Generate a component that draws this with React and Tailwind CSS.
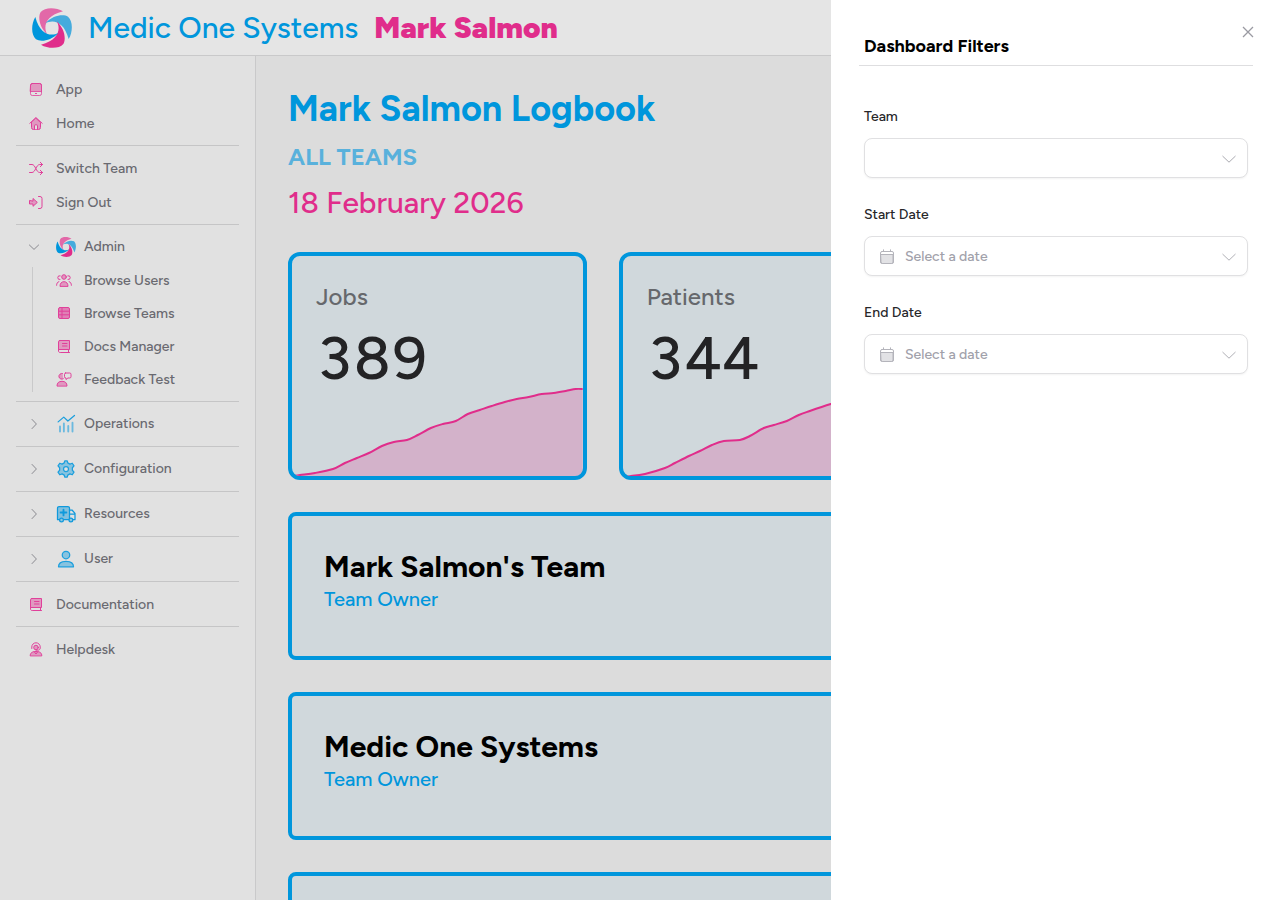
import { useState } from 'react';

const jobsData = [
  [2, 88], [8, 87], [23, 85], [41, 81], [53, 75], [65, 70], [77, 65], [90, 58], [102, 54], [115, 52],
  [126, 47], [139, 40], [151, 36], [164, 33], [176, 26], [188, 22], [200, 18], [213, 14], [225, 11],
  [237, 9], [250, 6], [262, 5], [274, 3], [284, 1], [291, 1],
];

const patientsData = [
  [2, 88], [8, 88], [22, 86], [42, 80], [52, 75], [66, 68], [77, 63], [89, 57], [101, 53], [117, 52],
  [127, 48], [141, 40], [151, 37], [164, 33], [176, 27], [187, 23], [208, 16], [225, 11], [250, 6],
  [274, 3], [284, 1], [291, 1],
];

const smoothLine = (points) => {
  let d = `M${points[0][0]} ${points[0][1]}`;
  for (let i = 0; i < points.length - 1; i++) {
    const p0 = points[i - 1] || points[i];
    const p1 = points[i];
    const p2 = points[i + 1];
    const p3 = points[i + 2] || p2;
    d += `C${p1[0] + (p2[0] - p0[0]) / 6} ${p1[1] + (p2[1] - p0[1]) / 6} ${p2[0] - (p3[0] - p1[0]) / 6} ${p2[1] - (p3[1] - p1[1]) / 6} ${p2[0]} ${p2[1]}`;
  }
  return d;
};

const Logo = ({ className }) => {
  const blade = 'M93 10C72 -3 38 -3 26 12C18 25 20 56 46 80C33 58 39 24 93 10Z';
  return (
    <svg viewBox="0 0 120 120" className={className} aria-hidden="true">
      <path d={blade} fill="#e268a8" />
      <path d={blade} fill="#45abdd" transform="rotate(90 60 60)" />
      <path d={blade} fill="#e02d8b" transform="rotate(180 60 60)" />
      <path d={blade} fill="#0096dc" transform="rotate(270 60 60)" />
    </svg>
  );
};

const Icon = ({ className = 'size-4 text-[#e0409a]', children }) => (
  <svg
    viewBox="0 0 16 16"
    fill="none"
    stroke="currentColor"
    strokeLinecap="round"
    strokeLinejoin="round"
    className={`shrink-0 ${className}`}
    aria-hidden="true"
  >
    {children}
  </svg>
);

const tint = { fill: 'currentColor', fillOpacity: 0.45 };

const AppIcon = () => (
  <Icon>
    <rect x="2.5" y="1.5" width="11" height="12" rx="1.8" strokeOpacity="0.8" />
    <path d="M2.5 3.3a1.8 1.8 0 0 1 1.8-1.8h7.4a1.8 1.8 0 0 1 1.8 1.8v6.2h-11Z" {...tint} strokeOpacity="0.8" />
    <path d="M7.5 11.5h1" />
  </Icon>
);

const HomeIcon = () => (
  <Icon>
    <path d="M3.5 6.500v5a2 2 0 0 0 2 2h5a2 2 0 0 0 2-2v-5L8 2.300Z" {...tint} />
    <path d="M1.800 7.300L8 1.600L14.200 7.300" />
    <path d="M6.500 13.300V9.500a.6.6 0 0 1 .6-.6h1.800a.6.6 0 0 1 .6.6v3.800" fill="#e1e1e1" />
  </Icon>
);

const ShuffleIcon = () => (
  <Icon>
    <path d="M1.500 3.500H4C7.500 3.500 8 11.500 11.800 11.500H14.500M1.500 11.500H4C7.500 11.500 8 3.500 11.800 3.500H14.500" />
    <path d="M12.300 1.300L14.500 3.500L12.300 5.700M12.300 9.300L14.500 11.500L12.300 13.700" />
  </Icon>
);

const SignOutIcon = () => (
  <Icon>
    <path d="M1.500 5.800v3.200h3.500v2.300L9.300 7.400L5 3.500V5.800Z" {...tint} />
    <path d="M10.500 1.500h1.500a2 2 0 0 1 2 2v8a2 2 0 0 1-2 2h-1.500" />
  </Icon>
);

const UsersIcon = () => (
  <Icon>
    <circle cx="8" cy="4" r="2.300" {...tint} />
    <path d="M4 13c0-2.600 1.500-4.300 4-4.300s4 1.700 4 4.300Z" {...tint} />
    <path d="M4 6.500a1.900 1.900 0 1 1 .2-3.700M12 6.500a1.900 1.900 0 1 0-.2-3.700M.6 12.300c0-1.900.8-3.200 2.300-3.700M15.400 12.300c0-1.900-.8-3.200-2.300-3.700" />
  </Icon>
);

const TableIcon = () => (
  <Icon>
    <rect x="2.500" y="1.500" width="11" height="11" rx="1.500" {...tint} fillOpacity="0.6" />
    <path d="M2.500 5.200h11M2.500 8.800h11M6 1.500v11" />
  </Icon>
);

const BookIcon = () => (
  <Icon>
    <path d="M3.800 1.500h9.700v9h-11V2.800a1.300 1.300 0 0 1 1.300-1.300Z" {...tint} />
    <path d="M2.500 10.500v1.500c0 1 .7 1.500 1.700 1.500h9.300M12.500 10.500v3M6.500 4.500h4.500M6.500 7h4.500" />
  </Icon>
);

const FeedbackIcon = () => (
  <Icon>
    <path d="M1 13.700c0-2.700 1.700-4.400 5-4.400s5 1.700 5 4.400Z" {...tint} />
    <path d="M6.500 1.500a2.900 2.900 0 1 0 .8 5.300" {...tint} />
    <path d="M9.500 1h4.200a1.300 1.300 0 0 1 1.300 1.300v2.400a1.300 1.300 0 0 1-1.300 1.300h-1.800L10 7.500V6a1.300 1.300 0 0 1-1.500-1.300V2.300a1.300 1.300 0 0 1 1-1.300Z" />
  </Icon>
);

const HelpdeskIcon = () => (
  <Icon>
    <path d="M2.200 13.500c0-2.500 1.800-4 5.800-4s5.800 1.500 5.800 4Z" {...tint} />
    <path d="M6 9.500l2 2.500l2-2.500M3.800 6.500V5a4.200 4.200 0 0 1 8.400 0v1c0 1.500-1 2.200-2.500 2.200H8" />
    <circle cx="8" cy="5.500" r="2.300" {...tint} />
  </Icon>
);

const ChartIcon = () => (
  <Icon className="size-5 text-[#1c9fdd]">
    <path d="M1.700 6.300L6.200 2.500L9.500 5.600L14.800 1.200" />
    <path d="M3.200 10v4M6.300 7.500v6.500M9.800 9.500v4.500M13.200 7v7" strokeWidth="1.500" strokeOpacity="0.6" />
  </Icon>
);

const GearIcon = () => (
  <Icon className="size-5 text-[#1c9fdd]">
    <path
      d="M6.600 3.100L7 1.500h2l.4 1.600l1.700 1l1.900-.7l1.400 2.100L13.100 7v2l1.300 1.500l-1.400 2.100l-1.900-.7l-1.700 1L9 14.500H7l-.4-1.600l-1.700-1l-1.900.7l-1.400-2.100L2.900 9V7L1.600 5.500L3 3.400l1.900.7Z"
      {...tint}
    />
    <circle cx="8" cy="8" r="2" fill="#e1e1e1" />
  </Icon>
);

const AmbulanceIcon = () => (
  <Icon className="size-5 text-[#0f99dc]">
    <path d="M1.200 3.300a1.300 1.300 0 0 1 1.300-1.300h7a1.300 1.300 0 0 1 1.300 1.300v9.200H1.200Z" {...tint} />
    <path d="M10.800 4.800h2l2.400 2.700v5h-4.400M10.800 8h4.400" />
    <path d="M6 4.500v4.600M3.700 6.800h4.600" strokeWidth="1.500" />
    <circle cx="4.400" cy="12.700" r="1.500" fill="#8cc6e0" />
    <circle cx="11.900" cy="12.700" r="1.500" fill="#8cc6e0" />
  </Icon>
);

const UserIcon = () => (
  <Icon className="size-5 text-[#1c9fdd]">
    <circle cx="8" cy="4.800" r="3" {...tint} />
    <path d="M2 14.200c0-3 1.700-4.400 6-4.400s6 1.400 6 4.400Z" {...tint} />
  </Icon>
);

const CalendarIcon = () => (
  <Icon className="size-4 text-[#b4b4bb]">
    <rect x="1.500" y="2.500" width="13" height="12" rx="1.500" />
    <path d="M2 5.500h12v7.500a1.500 1.500 0 0 1-1.500 1.500h-9A1.500 1.500 0 0 1 2 13Z" fill="#e2e2e5" />
    <path d="M4.500 .8v1.700M11.500 .8v1.700" />
  </Icon>
);

const Chevron = ({ className }) => (
  <svg viewBox="0 0 16 16" fill="none" stroke="currentColor" className={`shrink-0 ${className}`} aria-hidden="true">
    <path d="M1.500 5L8 11.200L14.500 5" vectorEffect="non-scaling-stroke" />
  </svg>
);

const NavLink = ({ icon, children }) => (
  <a href="#" className="flex h-8 items-center gap-3 px-3 pt-0.5">
    {icon}
    {children}
  </a>
);

const NavGroup = ({ icon, label, open = false, children }) => {
  const [expanded, setExpanded] = useState(open);
  return (
    <div>
      <button
        type="button"
        onClick={() => setExpanded(!expanded)}
        aria-expanded={expanded}
        className="flex h-8 w-full items-center gap-2 px-3"
      >
        <Chevron className={expanded ? 'mr-2 size-3 text-[#8a8a90]' : 'mr-2 size-3 -rotate-90 text-[#8a8a90]'} />
        {icon}
        {label}
      </button>
      {expanded && children}
    </div>
  );
};

const ChildLink = ({ icon, children }) => (
  <li>
    <a href="#" className="flex h-[26px] items-center gap-3 pt-0.5">
      {icon}
      {children}
    </a>
  </li>
);

const Divider = () => <hr className="my-1.5 border-[#c5c5c6]" />;

const Sidebar = () => (
  <nav className="w-64 shrink-0 border-r border-[#c9c9ca] bg-[#e1e1e1] px-4 pt-[17px] text-sm font-medium text-[#696970]">
    <div className="flex flex-col gap-0.5">
      <NavLink icon={<AppIcon />}>App</NavLink>
      <NavLink icon={<HomeIcon />}>Home</NavLink>
    </div>
    <Divider />
    <div className="flex flex-col gap-0.5">
      <NavLink icon={<ShuffleIcon />}>Switch Team</NavLink>
      <NavLink icon={<SignOutIcon />}>Sign Out</NavLink>
    </div>
    <Divider />
    <NavGroup icon={<Logo className="size-5" />} label="Admin" open>
      <ul className="mt-1 mb-[9px] ml-4 flex flex-col gap-[7px] border-l border-[#c9c9ca] pl-[23px]">
        <ChildLink icon={<UsersIcon />}>Browse Users</ChildLink>
        <ChildLink icon={<TableIcon />}>Browse Teams</ChildLink>
        <ChildLink icon={<BookIcon />}>Docs Manager</ChildLink>
        <ChildLink icon={<FeedbackIcon />}>Feedback Test</ChildLink>
      </ul>
    </NavGroup>
    <Divider />
    <NavGroup icon={<ChartIcon />} label="Operations" />
    <Divider />
    <NavGroup icon={<GearIcon />} label="Configuration" />
    <Divider />
    <NavGroup icon={<AmbulanceIcon />} label="Resources" />
    <Divider />
    <NavGroup icon={<UserIcon />} label="User" />
    <Divider />
    <NavLink icon={<BookIcon />}>Documentation</NavLink>
    <Divider />
    <NavLink icon={<HelpdeskIcon />}>Helpdesk</NavLink>
  </nav>
);

const StatCard = ({ label, value, data }) => {
  const line = smoothLine(data);
  return (
    <section className="overflow-hidden rounded-xl border-4 border-[#0096dc] bg-[#d0d8dc]">
      <div className="px-6 pt-[25px]">
        <h3 className="text-2xl font-medium text-[#66686c]">{label}</h3>
        <p className="mt-[15px] text-6xl leading-none font-medium text-[#232325] tabular-nums">{value}</p>
      </div>
      <svg viewBox="0 0 291 88" preserveAspectRatio="none" className="block h-22 w-full" aria-hidden="true">
        <path d={`${line}V88H0Z`} fill="#e02d8b" fillOpacity="0.22" />
        <path d={line} fill="none" stroke="#e02d8b" strokeWidth="2" />
      </svg>
    </section>
  );
};

const TeamCard = ({ name, role }) => (
  <section className="h-[148px] shrink-0 rounded-lg border-4 border-[#0096dc] bg-[#d0d8dc] px-8 pt-[33px]">
    <h3 className="text-3xl font-bold text-black">{name}</h3>
    <p className="text-xl font-medium text-[#0096dc]">{role}</p>
  </section>
);

const DateField = ({ id, label }) => (
  <div className="flex flex-col gap-[11px]">
    <label htmlFor={id} className="text-sm font-medium text-[#27272a]">{label}</label>
    <button
      id={id}
      type="button"
      className="flex h-10 items-center rounded-lg border border-[#e0e0e2] bg-white pt-0.5 pr-2.5 pl-3.5 text-left text-sm font-medium text-[#a1a1aa] shadow-xs"
    >
      <CalendarIcon />
      <span className="ml-2.5 grow">Select a date</span>
      <Chevron className="size-4 text-[#b0b0b6]" />
    </button>
  </div>
);

const FilterDrawer = ({ onClose }) => (
  <aside
    role="dialog"
    aria-labelledby="filters-title"
    className="fixed inset-y-0 right-0 w-[449px] max-w-full bg-white pr-8 pl-[33px]"
  >
    <button
      type="button"
      onClick={onClose}
      aria-label="Close"
      className="absolute top-6 right-6 flex size-4 items-center justify-center text-[#9a9aa2]"
    >
      <svg viewBox="0 0 16 16" fill="none" stroke="currentColor" strokeWidth="1.3" className="size-4" aria-hidden="true">
        <path d="M3 3l10 10M13 3L3 13" />
      </svg>
    </button>
    <div className="-mx-[5px] border-b border-[#dedee0] px-[5px] pt-8 pb-[5px]">
      <h2 id="filters-title" className="text-lg font-bold text-black">Dashboard Filters</h2>
    </div>
    <form className="mt-[41px] flex flex-col gap-[27px]">
      <div className="flex flex-col gap-[11px]">
        <label htmlFor="team" className="text-sm font-medium text-[#27272a]">Team</label>
        <div className="relative">
          <select
            id="team"
            defaultValue=""
            className="block h-10 w-full appearance-none rounded-lg border border-[#e0e0e2] bg-white px-3 text-sm shadow-xs"
          >
            <option value=""></option>
            <option value="salmon">Mark Salmon's Team</option>
            <option value="medic">Medic One Systems</option>
          </select>
          <Chevron className="pointer-events-none absolute top-[13px] right-[11px] size-4 text-[#a9a9b0]" />
        </div>
      </div>
      <DateField id="start-date" label="Start Date" />
      <DateField id="end-date" label="End Date" />
    </form>
  </aside>
);

export default function App() {
  const [filtersOpen, setFiltersOpen] = useState(true);

  return (
    <div className="flex h-screen flex-col overflow-hidden bg-[#dcdcdc] font-['Figtree','Lato',sans-serif]">
      <header className="flex h-14 shrink-0 items-center gap-4 border-b border-[#c9c9ca] bg-[#e5e5e5] px-8 text-3xl">
        <Logo className="size-10" />
        <span className="font-medium text-[#0096dc]">Medic One Systems</span>
        <span className="font-black text-[#e02d8b]">Mark Salmon</span>
      </header>
      <div className="flex min-h-0 grow">
        <Sidebar />
        <main className="min-w-0 grow overflow-hidden px-8 pt-[33px]">
          <h1 className="text-4xl font-bold text-[#0096dc]">Mark Salmon Logbook</h1>
          <h2 className="mt-3 text-2xl font-bold text-[#59b1dc]">ALL TEAMS</h2>
          <p className="mt-3 text-3xl font-medium text-[#e02d8b]">18 February 2026</p>
          <div className="mt-[31px] grid grid-cols-3 gap-8">
            <StatCard label="Jobs" value="389" data={jobsData} />
            <StatCard label="Patients" value="344" data={patientsData} />
          </div>
          <div className="mt-8 flex flex-col gap-8">
            <TeamCard name="Mark Salmon's Team" role="Team Owner" />
            <TeamCard name="Medic One Systems" role="Team Owner" />
            <TeamCard name="" role="" />
          </div>
        </main>
      </div>
      {filtersOpen && <FilterDrawer onClose={() => setFiltersOpen(false)} />}
    </div>
  );
}
